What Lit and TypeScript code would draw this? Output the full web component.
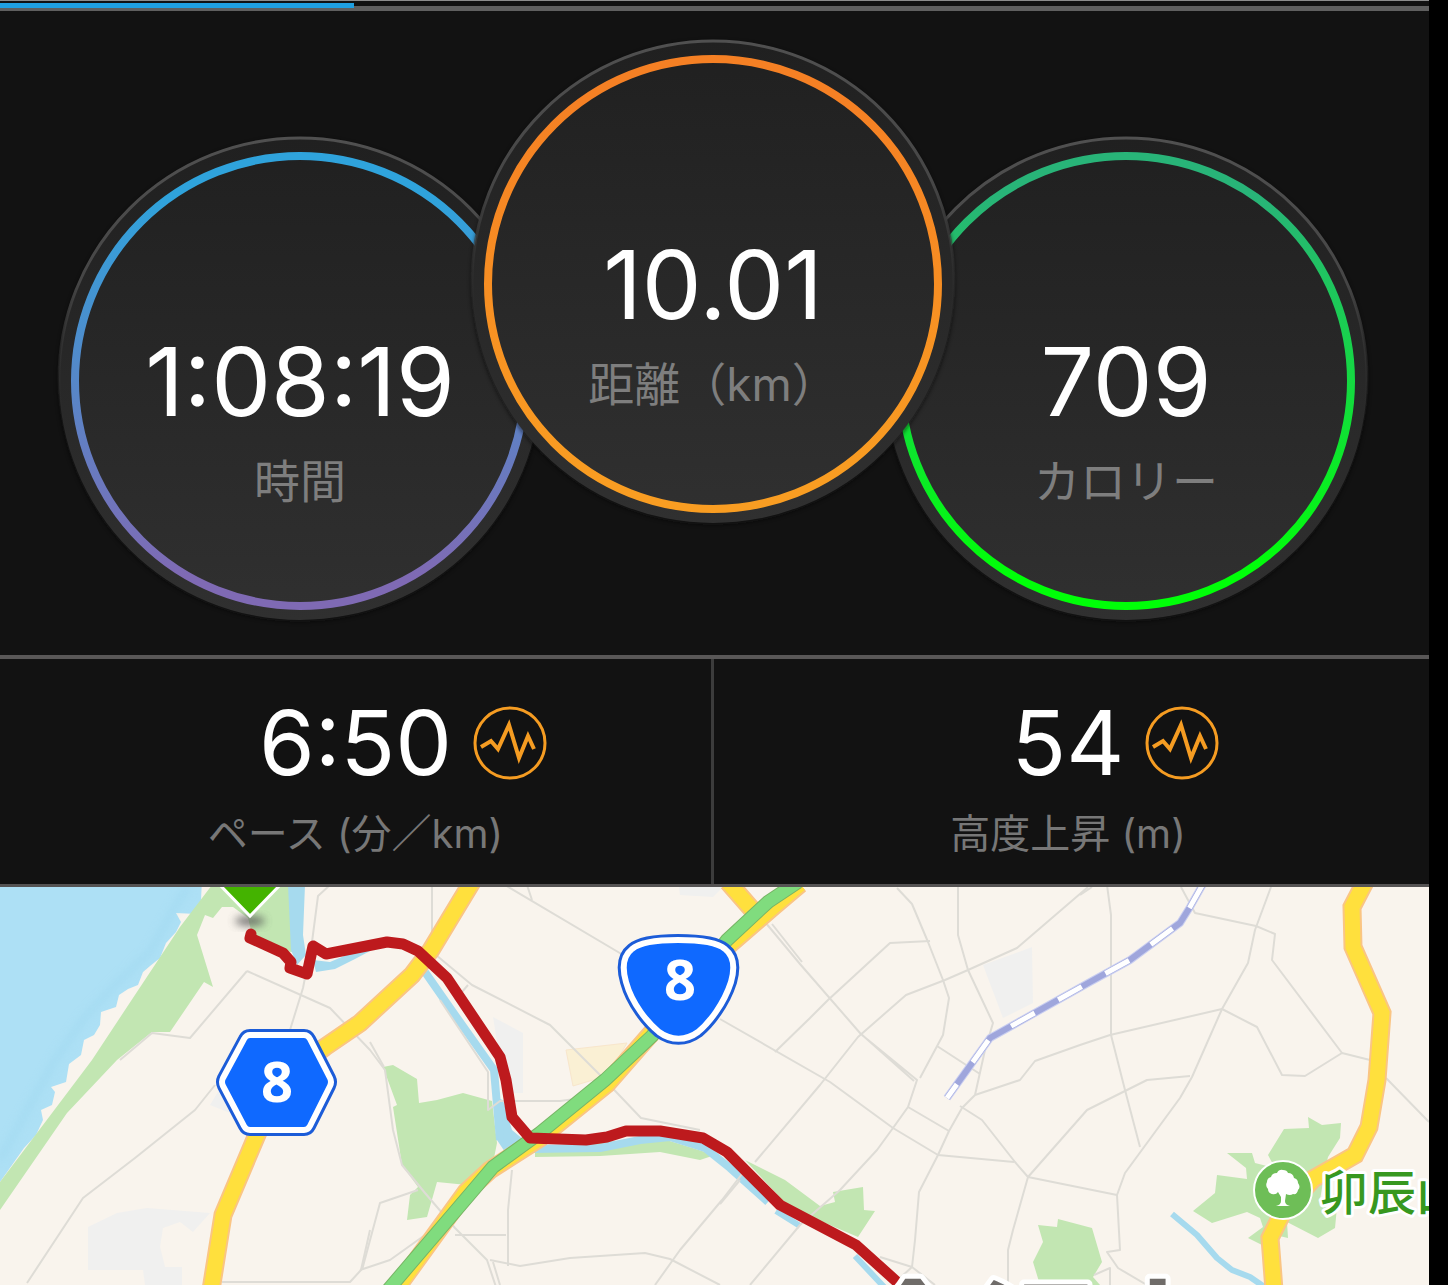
import { LitElement, html, css, svg } from 'lit';
import { customElement, property, state } from 'lit/decorators.js';

interface Ring {
  id: string;
  value: string;
  label: string;
  from: string;
  to: string;
}

interface Stat {
  value: string;
  label: string;
}

@customElement('stat-ring')
export class StatRing extends LitElement {
  @property() value = '';
  @property() label = '';
  @property() from = '#fff';
  @property() to = '#fff';

  static styles = css`
    :host {
      display: block;
      width: 486px;
      height: 486px;
    }

    .ring {
      display: grid;
      height: 100%;
    }

    .disc,
    .text {
      grid-area: 1 / 1;
    }

    .disc {
      width: 100%;
      height: 100%;
      overflow: visible;
    }

    .text {
      display: flex;
      flex-direction: column;
      align-items: center;
      gap: 26px;
      padding-top: 197px;
    }

    .value {
      font-size: 95px;
      line-height: 98px;
      color: #fff;
    }

    .label {
      font-size: 46px;
      line-height: 48px;
      font-weight: 400;
      color: #7e7e7e;
    }
  `;

  render() {
    return html`
      <div class="ring">
        <svg class="disc" viewBox="0 0 486 486" aria-hidden="true">
          <defs>
            <linearGradient id="face" x1="0" y1="0" x2="0" y2="1">
              <stop offset="0" stop-color="#202020" />
              <stop offset="1" stop-color="#303030" />
            </linearGradient>
            <linearGradient id="edge" x1="0" y1="0" x2="0" y2="1">
              <stop offset="0" stop-color="#505050" />
              <stop offset="0.3" stop-color="#464646" />
              <stop offset="0.6" stop-color="#2a2a2a" stop-opacity="0" />
            </linearGradient>
            <linearGradient id="stroke" gradientUnits="userSpaceOnUse" x1="0" y1="60" x2="0" y2="440">
              <stop offset="0" stop-color=${this.from} />
              <stop offset="1" stop-color=${this.to} />
            </linearGradient>
            <filter id="soft" x="-10%" y="-10%" width="120%" height="120%">
              <feGaussianBlur stdDeviation="2" />
            </filter>
          </defs>
          <circle cx="243" cy="244" r="242" fill="#0c0c0c" opacity="0.6" filter="url(#soft)" />
          <circle cx="243" cy="243" r="241" fill="url(#face)" />
          <circle cx="243" cy="243" r="241" fill="none" stroke="url(#edge)" stroke-width="3" />
          <circle cx="243" cy="245" r="225" fill="none" stroke="url(#stroke)" stroke-width="8" />
        </svg>
        <div class="text">
          <div class="value">${this.value}</div>
          <div class="label">${this.label}</div>
        </div>
      </div>
    `;
  }
}

@customElement('route-map')
export class RouteMap extends LitElement {
  static styles = css`
    :host {
      display: block;
    }

    .map {
      display: block;
      width: 100%;
      height: auto;
      overflow: hidden;
      background: #f9f4ed;
    }

    .land {
      fill: #f0f0ef;
    }

    .school {
      fill: #faf0d4;
      stroke: #f8e6cc;
    }

    .sea {
      fill: #ade0f5;
    }

    .coast {
      fill: none;
      stroke: #9bd6ee;
      stroke-width: 6;
      opacity: 0.5;
    }

    .park {
      fill: #c2e6b2;
    }

    .water {
      fill: none;
      stroke: #a6daee;
      stroke-width: 8;
      stroke-linejoin: round;
    }

    .water.fill {
      fill: #a6daee;
      stroke: none;
    }

    .water.thin {
      stroke-width: 6;
    }

    .street {
      fill: none;
      stroke: #dedcd6;
      stroke-width: 2;
      stroke-linejoin: round;
    }

    .casing {
      fill: none;
      stroke: #fac584;
      stroke-width: 19;
    }

    .road {
      fill: none;
      stroke: #ffe03d;
      stroke-width: 15;
    }

    .highway-edge {
      fill: none;
      stroke: #77b465;
      stroke-width: 14;
    }

    .highway {
      fill: none;
      stroke: #80dc7e;
      stroke-width: 12;
    }

    .rail {
      fill: none;
      stroke: #9fa6dc;
      stroke-width: 6;
    }

    .rail.edge {
      stroke: #c9cef0;
      stroke-width: 8;
    }

    .rail.gap {
      stroke: #fff;
      stroke-width: 5;
      stroke-dasharray: 27 27;
      stroke-dashoffset: 10;
    }

    .route {
      fill: none;
      stroke: #bd1a1d;
      stroke-width: 11;
      stroke-linejoin: round;
      stroke-linecap: round;
    }

    .shield-edge {
      fill: none;
      stroke: #1c5cd8;
      stroke-width: 12;
      stroke-linejoin: round;
    }

    .shield {
      fill: #0f69ff;
      stroke: #fff;
      stroke-width: 6;
      stroke-linejoin: round;
    }

    text {
      font-family: 'Noto Sans CJK JP', sans-serif;
      paint-order: stroke;
      stroke: #fff;
      stroke-linejoin: round;
    }

    .number {
      font-family: 'Open Sans', 'Noto Sans', sans-serif;
      font-size: 56px;
      font-weight: 700;
      fill: #fff;
      stroke: none;
      text-anchor: middle;
    }

    .place {
      font-size: 48px;
      font-weight: 500;
      fill: #37981f;
      stroke-width: 6;
    }

    .city {
      font-size: 122px;
      font-weight: 700;
      fill: #706c69;
      stroke-width: 10;
      text-anchor: middle;
    }
  `;

  // main roads share one centre line for casing and surface
  private _roads = [
    'M472 882L431 950L412 975L360 1023L325 1047L280 1080L256 1137L223 1215L211 1290',
    'M728 882L756 914L764 924',
    'M1365 882L1352 907L1353 947L1382 1013L1377 1080L1369 1127L1355 1155L1313 1179L1283 1212L1270 1238L1274 1290',
  ];

  private _streets = [
    'M247 971L190 1038L152 1033L120 1060M247 971L330 1008L370 1050L385 1070L393 1130L402 1165L425 1193L455 1228L487 1260L497 1290',
    'M330 885L318 896L312 942L303 988L290 1030M215 1085L195 1110L135 1158L83 1198L27 1283',
    'M432 885V935M430 950L472 985L550 1025L600 1075L641 1118L700 1130',
    'M505 885L640 965M527 885L532 900M720 1019L830 1082L893 1128L938 1155L1014 1162',
    'M370 1042L384 1067M440 1000L488 1072V1110L500 1101L560 1101L575 1099M468 985L455 1000',
    'M418 1190L380 1203L362 1270M512 1170L508 1210V1266M455 1235H506M360 1270L390 1260L425 1235',
    'M222 1282H350L361 1270L370 1230M490 1260L520 1266L570 1258L645 1253L670 1259L720 1285',
    'M655 1285L680 1250L722 1200L745 1170M493 1262L500 1285',
    'M765 922L800 964L860 1033L914 1081M772 924L802 962M862 1035L917 1080L908 1107L893 1128',
    'M893 1128L877 1150L840 1190L800 1225L750 1285M720 1204L740 1180',
    'M755 1162L820 1085L858 1037L906 995L945 980L968 970L1017 948L1088 887',
    'M775 1052L810 1018L828 1000L890 943L930 941',
    'M897 888L912 904L928 942L943 980L949 998L943 1035L920 1078M937 1046L980 1074',
    'M958 885V935L968 970L993 1023L985 1050L975 1095M908 1107L949 1131',
    'M975 1095L1020 1080L1035 1061L1080 1045L1110 1035L1222 1009L1257 1027L1282 1075L1305 1076L1342 1053L1370 1060',
    'M975 1095L962 1108L949 1131L938 1155L919 1192L915 1240L912 1267L935 1285M880 1257L912 1267L900 1278',
    'M960 1106L982 1120L1015 1162L1028 1177L1013 1230L1008 1250V1285',
    'M1028 1177L1087 1110L1127 1090L1147 1080L1190 1076M1028 1177L1117 1195',
    'M1080 895L1092 887M1107 885L1111 915V1035L1125 1090L1140 1147',
    'M1181 887L1195 913L1256 926L1275 934L1272 960L1342 1053',
    'M1271 887L1255 930L1248 963L1222 1009L1192 1077L1180 1098L1125 1173L1117 1195L1120 1250L1107 1252L1118 1268L1147 1285',
    'M1386 1078L1429 1122M1094 1275L1110 1268V1285',
  ];

  private _rail = 'M947 1098L990 1038L1090 982L1130 960L1180 923L1190 907L1203 884';

  private _shields = [
    {
      x: 277,
      y: 1102,
      number: '8',
      d: 'M250 1035H304Q308 1035 310 1039L330 1078Q332 1082 330 1086L310 1126Q308 1130 304 1130H250Q246 1130 244 1126L223 1086Q221 1082 223 1078L244 1039Q246 1035 250 1035Z',
    },
    {
      x: 680,
      y: 1000,
      number: '8',
      d: 'M678 940C698 940 717 942 725 949C734 956 735 968 731 982C724 1004 709 1023 698 1032C686 1041 671 1041 659 1032C648 1023 632 1004 626 982C622 968 623 956 632 949C640 942 659 940 678 940Z',
    },
  ];

  render() {
    return html`
      <svg class="map" viewBox="0 887 1429 398" role="img" aria-label="ルートマップ">
        <defs>
          <filter id="blur" x="-30%" y="-60%" width="160%" height="220%">
            <feGaussianBlur stdDeviation="4" />
          </filter>
        </defs>

        <path class="land" d="M88 1227L117 1213L147 1208L210 1213L193 1232L180 1222L163 1228L160 1247L165 1267H182V1285H145L143 1270H88ZM983 965L1032 947L1033 1003L1003 1018ZM493 1017L523 1033V1093H510L500 1060ZM679 887H723L713 897L680 895ZM210 1105L222 1085L235 1115Z" />
        <path class="school" d="M566 1050L627 1043L607 1077L593 1080L573 1086Z" />
        <path class="sea" d="M0 880H202L201 900L196 914L176 913L181 922L176 932L166 943L160 958L150 966L143 972L138 985L128 989L119 995L116 1007L101 1012L100 1025L94 1035L84 1040L81 1055L69 1064L66 1082L51 1087L55 1092L52 1105L41 1110L43 1120L36 1135L24 1148L0 1182Z" />
        <path class="coast" filter="url(#blur)" d="M188 887L176 905L150 952L115 985L85 1017L55 1060L30 1105L0 1160" />
        <path class="park" d="M212 885H290L292 952L283 951L253 938L248 918L233 907L222 907L213 918L205 915L197 935L213 987L204 982L170 1032H152L117 1060L67 1113L0 1210V1182L43 1125L92 1060L125 1010L180 927Z" />
        <path class="park" d="M383 1067L393 1065L417 1079L419 1103L437 1100L463 1093L492 1101L497 1143L493 1163L467 1185L437 1182L427 1217L407 1220L410 1195L418 1187L402 1165L393 1107L397 1105Z" />
        <path class="park" d="M535 1147L660 1138L715 1155L700 1160L660 1152L600 1156L535 1157ZM745 1160L785 1180L820 1206L835 1202L833 1192L863 1187L864 1210L875 1211L858 1237L790 1208Z" />
        <path class="park" d="M1038 1225L1057 1227L1058 1219L1092 1228L1102 1262L1093 1277L1100 1285H1040L1033 1262L1043 1242Z" />
        <path class="park" d="M1227 1153L1252 1153L1255 1163L1275 1168L1268 1155L1284 1129L1309 1128L1308 1117L1322 1125L1341 1123L1340 1138L1328 1157L1325 1170L1320 1200L1337 1207L1335 1228L1318 1238L1287 1222L1288 1238L1275 1235L1262 1245L1248 1238L1263 1227L1260 1218L1247 1212L1212 1223L1193 1211L1215 1193L1217 1175L1247 1179L1246 1168Z" />

        <path class="water fill" d="M288 885H305L303 935L306 955L297 965L291 950ZM313 960L330 962L370 945L385 943L355 959L335 969L316 972ZM494 1097L503 1100L512 1130L530 1145L505 1152L497 1140Z" />
        <path class="water" d="M425 972L455 1015L494 1070L500 1140M530 1149L600 1148L640 1140L670 1137L705 1148L730 1168L768 1202" />
        <path class="water thin" d="M776 1211L800 1226M855 1256L885 1288M1172 1214L1197 1235L1217 1258L1232 1270L1250 1277L1266 1288" />

        ${this._streets.map((d) => svg`<path class="street" d=${d} />`)}
        ${this._roads.map((d) => svg`<path class="casing" d=${d} />`)}
        <path class="casing" d="M800 884L774 906L730 944L648 1037L607 1084L540 1138L490 1170L466 1192L395 1290" />
        ${this._roads.map((d) => svg`<path class="road" d=${d} />`)}
        <path class="road" d="M800 884L774 906L730 944L648 1037L607 1084L540 1138L490 1170L466 1192L399 1285" />
        <path class="highway-edge" d="M798 882L768 902L727 940L652 1036L605 1080L540 1133L493 1167L470 1194L388 1290" />
        <path class="highway" d="M798 882L768 902L727 940L652 1036L605 1080L540 1133L493 1167L470 1194L388 1290" />

        <path class="rail edge" d=${this._rail} />
        <path class="rail" d=${this._rail} />
        <path class="rail gap" d=${this._rail} />

        <ellipse cx="250" cy="921" rx="15" ry="5" fill="#555" opacity="0.8" filter="url(#blur)" />
        <path class="route" d="M251 934L250 938L283 953L291 962L290 968L307 974L313 946L326 954L387 942L403 944L418 951L447 978L500 1057L506 1080L512 1117L530 1138L586 1140L607 1137L626 1131H660L703 1138L727 1152L780 1205L856 1245L896 1281" />
        <path d="M218 883L250 916L282 883Z" fill="#44b300" stroke="#fff" stroke-width="3" />

        ${this._shields.map(
          (s) => svg`
            <path class="shield-edge" d=${s.d} />
            <path class="shield" d=${s.d} />
            <text class="number" x=${s.x} y=${s.y}>${s.number}</text>
          `
        )}

        <circle cx="1283" cy="1190" r="29" fill="#6ebe57" stroke="#fff" stroke-width="2" />
        <path
          fill="#fff"
          d="M1276 1206Q1281 1205 1281 1201V1197L1278 1192Q1276 1195 1272 1194Q1268 1193 1268 1189Q1265 1186 1267 1182Q1267 1178 1271 1177Q1272 1173 1277 1173Q1279 1169 1283 1170Q1287 1170 1288 1173Q1293 1173 1294 1178Q1298 1179 1298 1183Q1301 1187 1298 1190Q1297 1195 1293 1194Q1290 1196 1286 1194L1285 1201Q1285 1205 1290 1206Z"
        />
        <text class="place" x="1320" y="1210">卯辰山公園</text>
        <text class="city" x="1036" y="1383">金沢市</text>
      </svg>
    `;
  }
}

@customElement('app-root')
export class AppRoot extends LitElement {
  @state() private progress = 24.8;

  @state() private rings: Ring[] = [
    { id: 'side', value: '1:08:19', label: '時間', from: '#2fa3dc', to: '#7f6ab4' },
    { id: 'main', value: '10.01', label: '距離（km）', from: '#f58024', to: '#f99d22' },
    { id: 'side', value: '709', label: 'カロリー', from: '#28b478', to: '#00ff08' },
  ];

  @state() private stats: Stat[] = [
    { value: '6:50', label: 'ペース (分／km)' },
    { value: '54', label: '高度上昇 (m)' },
  ];

  static styles = css`
    :host {
      display: block;
      min-height: 100vh;
      box-sizing: border-box;
      padding-right: 19px;
      background: #000;
      font-family: Inter, 'Noto Sans CJK JP', sans-serif;
    }

    .panel {
      background: #121212;
    }

    .progress {
      height: 8px;
      padding-top: 2px;
      border-top: 1px solid #8c8c8c;
      background: linear-gradient(#111 5px, #5f5f5f 5px);
    }

    .bar {
      height: 5px;
      background: #1f9fe0;
    }

    .rings {
      display: flex;
      justify-content: center;
      align-items: flex-start;
      height: 616px;
      padding: 28px 3px 0 0;
    }

    .side {
      flex: none;
      margin-top: 97px;
    }

    .main {
      flex: none;
      margin: 0 -73px;
      z-index: 1;
    }

    .stats {
      display: grid;
      grid-template-columns: 1fr 1fr;
      height: 225px;
      padding-right: 7px;
      border-top: 4px solid #595757;
      border-bottom: 3px solid #555353;
    }

    .stat {
      display: flex;
      flex-direction: column;
      gap: 18px;
      padding-top: 34px;
    }

    .stat + .stat {
      border-left: 3px solid #3c3c3c;
    }

    .row {
      display: grid;
      grid-template-columns: 1fr auto 1fr;
      align-items: center;
      column-gap: 21px;
    }

    .value {
      grid-column: 2;
      font-size: 90px;
      line-height: 100px;
      color: #fff;
    }

    .chart {
      width: 74px;
      height: 74px;
      padding: 0;
      border: 0;
      background: none;
      cursor: pointer;
    }

    .chart svg {
      display: block;
      fill: none;
      stroke: #f59c22;
    }

    .label {
      text-align: center;
      font-size: 40px;
      line-height: 46px;
      font-weight: 400;
      color: #777;
    }
  `;

  render() {
    return html`
      <div class="panel">
        <div class="progress">
          <div class="bar" style="width: ${this.progress}%"></div>
        </div>
        <div class="rings">
          ${this.rings.map(
            (r) => html`
              <stat-ring class=${r.id} value=${r.value} label=${r.label} from=${r.from} to=${r.to}></stat-ring>
            `
          )}
        </div>
        <div class="stats">
          ${this.stats.map(
            (s) => html`
              <div class="stat">
                <div class="row">
                  <div class="value">${s.value}</div>
                  <button class="chart" aria-label=${s.label}>
                    <svg width="74" height="74" viewBox="0 0 74 74">
                      <circle cx="37" cy="37" r="35" stroke-width="3" />
                      <path d="M8 41L18 35L25 43L36 19L46 52L55 30L61 43" stroke-width="4" />
                    </svg>
                  </button>
                </div>
                <div class="label">${s.label}</div>
              </div>
            `
          )}
        </div>
      </div>
      <route-map></route-map>
    `;
  }
}
